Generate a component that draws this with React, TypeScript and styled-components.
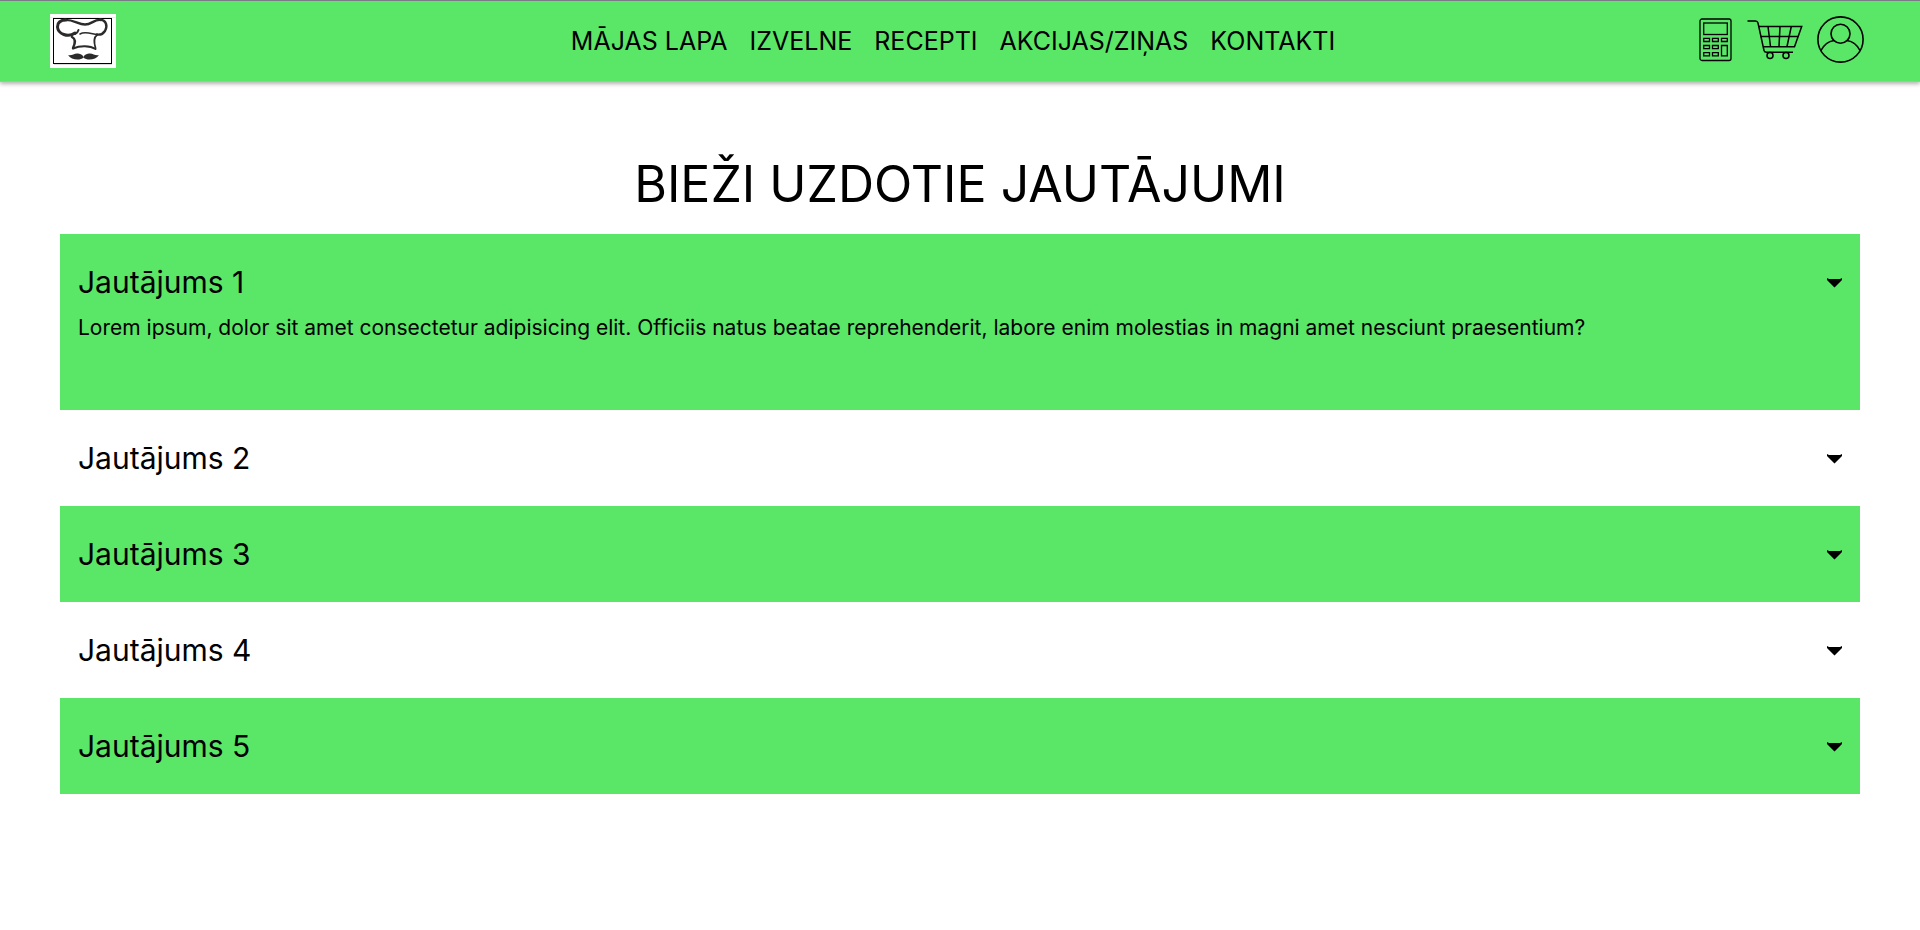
import React, { useState } from "react";
import styled, { createGlobalStyle } from "styled-components";

const green = "#5ae666";

const GlobalStyle = createGlobalStyle`
  *, *::before, *::after { box-sizing: border-box; }
  body {
    margin: 0;
    background: #fff;
    color: #000;
    font-family: Inter, "Liberation Sans", sans-serif;
  }
`;

const Header = styled.header`
  display: grid;
  grid-template-columns: 1fr auto 1fr;
  align-items: center;
  height: 82px;
  padding: 0 56px 0 50px;
  border-top: 1px solid #7a7a86;
  border-bottom: 1px solid #a9bfab;
  background: ${green};
  box-shadow: 0 2px 4px rgba(0, 0, 0, 0.3);
`;

const LogoLink = styled.a`
  display: block;
  width: 66px;
  height: 54px;

  svg { display: block; }
`;

const NavList = styled.ul`
  display: flex;
  gap: 22px;
  margin: 0;
  padding: 0 8px 0 0;
  list-style: none;
`;

const NavLink = styled.a`
  color: inherit;
  font-size: 25px;
  line-height: 30px;
  text-decoration: none;
  white-space: nowrap;
`;

const Tools = styled.div`
  display: flex;
  align-items: center;
  justify-content: flex-end;
  gap: 14px;
  padding-bottom: 3px;
`;

const ToolLink = styled.a`
  display: block;
  color: #000;

  svg {
    display: block;
    fill: none;
    stroke: currentColor;
  }
`;

const Main = styled.main`
  padding: 72px 60px 0;
`;

const Title = styled.h1`
  margin: 0 0 20px;
  font-size: 50px;
  font-weight: 400;
  line-height: 60px;
  text-align: center;
`;

const Item = styled.section<{ $tinted: boolean }>`
  padding: 24px 18px;
  background: ${(p) => (p.$tinted ? green : "#fff")};
`;

const ItemHeading = styled.h2`
  margin: 0;
  font-size: 30px;
  font-weight: 400;
`;

const Toggle = styled.button`
  display: flex;
  align-items: center;
  justify-content: space-between;
  width: 100%;
  height: 48px;
  padding: 0;
  border: 0;
  background: none;
  color: inherit;
  font: inherit;
  cursor: pointer;
`;

const Answer = styled.p`
  margin: 0;
  padding: 8px 0 44px;
  font-size: 21px;
  line-height: 28px;
`;

const Logo = () => (
  <svg width="66" height="54" viewBox="0 0 66 54" aria-hidden="true">
    <rect width="66" height="54" fill="#fff" />
    <path d="M0 3.5H66" stroke="#eee" />
    <rect x="4" y="48" width="58" height="3" fill="#ddd" />
    <rect x="3.5" y="4.5" width="58" height="45" fill="#fff" stroke="#000" />
    <g fill="none" stroke="#2b2b2b" strokeLinecap="round">
      <path strokeWidth="3" d="M25 19C18 24 8 20 7.500 13C7.500 8 11 6 16 6" />
      <path strokeWidth="2.400" d="M14 6C23 5 28 10.500 35 10.500C42 10.500 44 5 51 6" />
      <path strokeWidth="2.400" d="M50 5.500C56 6 58 12 55 17C53 20 50 21 47 20.500" />
      <path strokeWidth="2" d="M25 20C27 19 28 18 28.500 16" />
      <path strokeWidth="1.500" d="M30 20C35 17 42 20 47 20.500" />
      <path strokeWidth="2.400" d="M22 23C26 25 25 30 23 34" />
      <path strokeWidth="1.800" d="M47 21C43 24 44 29 45.500 34" />
      <path strokeWidth="2" d="M23 34.500C30 31.500 40 31.500 45.500 35" />
    </g>
    <path
      fill="#2b2b2b"
      d="M18 41C22 42 24 39 28 39.500C31 40 33 41 33.500 43C34 41 36 40 39 39.500C43 39 45 42 49 41C46 46 37 47 33.500 43.500C30 47 21 46 18 41Z"
    />
  </svg>
);

const Calculator = () => (
  <svg width="34" height="44" viewBox="0 0 34 44" strokeWidth="1.300" aria-hidden="true">
    <rect x="1" y="1" width="31" height="41.500" rx="2" />
    <rect x="4.700" y="5" width="23.600" height="11.500" />
    <path d="M4.700 20.300h5.800v3.200h-5.800zM13.500 20.300h5.800v3.200h-5.800zM22.500 20.300h5.800v3.200h-5.800zM4.700 27.500h5.800v3.200h-5.800zM13.500 27.500h5.800v3.200h-5.800zM4.700 34.700h5.800v3.200h-5.800zM13.500 34.700h5.800v3.200h-5.800zM22.500 27.500h5.800v10.400h-5.800z" />
  </svg>
);

const Cart = () => (
  <svg width="56" height="42" viewBox="0 0 56 42" strokeWidth="1.500" aria-hidden="true">
    <path d="M.500 2H8.500Q10.500 2 11 4L17 31.500Q17.500 33.300 19.500 33.300H46" />
    <path d="M12 7.500H54.700L47.500 27.700H16M13.500 17.500H51M21 7.500L23.500 27.500M33 7.500L32 27.500M44.300 7.500L40 27.500" />
    <circle cx="23" cy="36.500" r="3" />
    <circle cx="39" cy="36.500" r="3" />
  </svg>
);

const User = () => (
  <svg width="47" height="47" viewBox="0 0 47 47" strokeWidth="1.600" aria-hidden="true">
    <circle cx="23.500" cy="23.500" r="22.600" />
    <circle cx="23.500" cy="17.700" r="9.500" />
    <path d="M4 34.500C6.500 29.500 11 25.500 17 24.500M30 24.500C36 25.500 40.500 29.500 43 34.500" />
  </svg>
);

const Chevron = () => (
  <svg width="15" height="12" viewBox="0 -2 15 12" aria-hidden="true">
    <path d="M0 0L2 1H13L15 0V2L7.500 9.500L0 2Z" />
  </svg>
);

const links = ["MĀJAS LAPA", "IZVELNE", "RECEPTI", "AKCIJAS/ZIŅAS", "KONTAKTI"];

const answer =
  "Lorem ipsum, dolor sit amet consectetur adipisicing elit. Officiis natus beatae reprehenderit, labore enim molestias in magni amet nesciunt praesentium?";

const questions = [1, 2, 3, 4, 5].map((n) => ({ id: n, title: `Jautājums ${n}` }));

export default function App() {
  const [openId, setOpenId] = useState<number | null>(1);

  return (
    <>
      <GlobalStyle />
      <Header>
        <LogoLink href="#" aria-label="Sākums">
          <Logo />
        </LogoLink>
        <nav>
          <NavList>
            {links.map((label) => (
              <li key={label}>
                <NavLink href="#">{label}</NavLink>
              </li>
            ))}
          </NavList>
        </nav>
        <Tools>
          <ToolLink href="#" aria-label="Kalkulators">
            <Calculator />
          </ToolLink>
          <ToolLink href="#" aria-label="Grozs">
            <Cart />
          </ToolLink>
          <ToolLink href="#" aria-label="Profils">
            <User />
          </ToolLink>
        </Tools>
      </Header>
      <Main>
        <Title>BIEŽI UZDOTIE JAUTĀJUMI</Title>
        {questions.map(({ id, title }) => (
          <Item key={id} $tinted={id % 2 === 1}>
            <ItemHeading>
              <Toggle
                type="button"
                aria-expanded={openId === id}
                aria-controls={`answer-${id}`}
                onClick={() => setOpenId(openId === id ? null : id)}
              >
                {title}
                <Chevron />
              </Toggle>
            </ItemHeading>
            {openId === id && <Answer id={`answer-${id}`}>{answer}</Answer>}
          </Item>
        ))}
      </Main>
    </>
  );
}
